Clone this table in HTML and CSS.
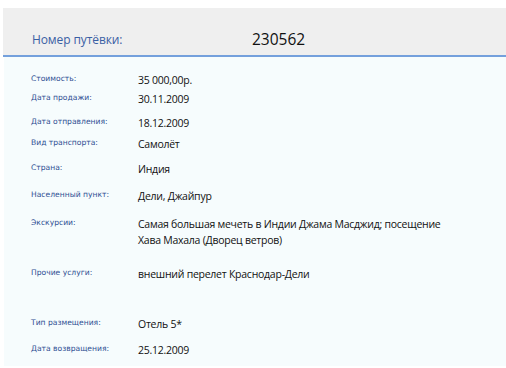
FILE: index.html
```html
<!DOCTYPE html>
<html lang="ru">
<head>
<meta charset="utf-8">
<title>Номер путёвки</title>
<link rel="stylesheet" href="styles.css">
</head>
<body>
<div class="page">
  <div class="header">
    <span class="header-title">Номер путёвки:</span>
    <span class="header-number">230562</span>
  </div>
  <div class="card">
    <div class="row r1"><span class="label">Стоимость:</span><span class="value">35 000,00р.</span></div>
    <div class="row r2"><span class="label">Дата продажи:</span><span class="value">30.11.2009</span></div>
    <div class="row r3"><span class="label">Дата отправления:</span><span class="value">18.12.2009</span></div>
    <div class="row r4"><span class="label">Вид транспорта:</span><span class="value">Самолёт</span></div>
    <div class="row r5"><span class="label">Страна:</span><span class="value">Индия</span></div>
    <div class="row r6"><span class="label">Населенный пункт:</span><span class="value">Дели, Джайпур</span></div>
    <div class="row r7"><span class="label">Экскурсии:</span><span class="value">Самая большая мечеть в Индии Джама Масджид; посещение<br>Хава Махала (Дворец ветров)</span></div>
    <div class="row r8"><span class="label">Прочие услуги:</span><span class="value">внешний перелет Краснодар-Дели</span></div>
    <div class="row r9"><span class="label">Тип размещения:</span><span class="value">Отель 5*</span></div>
    <div class="row r10"><span class="label">Дата возвращения:</span><span class="value">25.12.2009</span></div>
  </div>
</div>
</body>
</html>
```

FILE: styles.css
```css
html, body {
  margin: 0;
  padding: 0;
  background: #ffffff;
}
body {
  width: 506px;
  height: 368px;
  overflow: hidden;
  font-family: "Open Sans", "Noto Sans", sans-serif;
}
.page {
  padding-top: 8px;
  height: 368px;
  box-sizing: border-box;
  display: flex;
  flex-direction: column;
}
.header {
  margin-left: 3px;
  display: flex;
  align-items: flex-end;
  padding-left: 29px;
  padding-bottom: 7px;
  box-sizing: border-box;
  background: #efefef;
  border-bottom: 2px solid #74a0dc;
  height: 49px;
  flex: none;
}
.header-title {
  font-size: 12px;
  letter-spacing: -0.1px;
  color: #3a60a4;
  width: 220px;
  line-height: 16px;
}
.header-number {
  font-size: 15.5px;
  color: #111;
  line-height: 18px;
}
.card {
  flex: 1;
  margin-left: 4px;
  margin-bottom: 2px;
  background: #f6fcfd;
  padding: 15px 0 0 27px;
}
.row {
  display: grid;
  grid-template-columns: 107px 1fr;
  align-items: start;
}
.label {
  font-family: "DejaVu Sans", sans-serif;
  font-size: 7.6px;
  color: #2f4f93;
  line-height: 14px;
}
.value {
  font-size: 10.5px;
  letter-spacing: -0.25px;
  color: #111;
  line-height: 16px;
}
.r2 { margin-top: 3px; }
.r3 { margin-top: 8px; }
.r4 { margin-top: 5px; }
.r5 { margin-top: 9px; }
.r6 { margin-top: 11px; }
.r7 { margin-top: 12px; }
.r8 { margin-top: 18px; }
.r9 { margin-top: 34px; }
.r10 { margin-top: 10px; }
```
